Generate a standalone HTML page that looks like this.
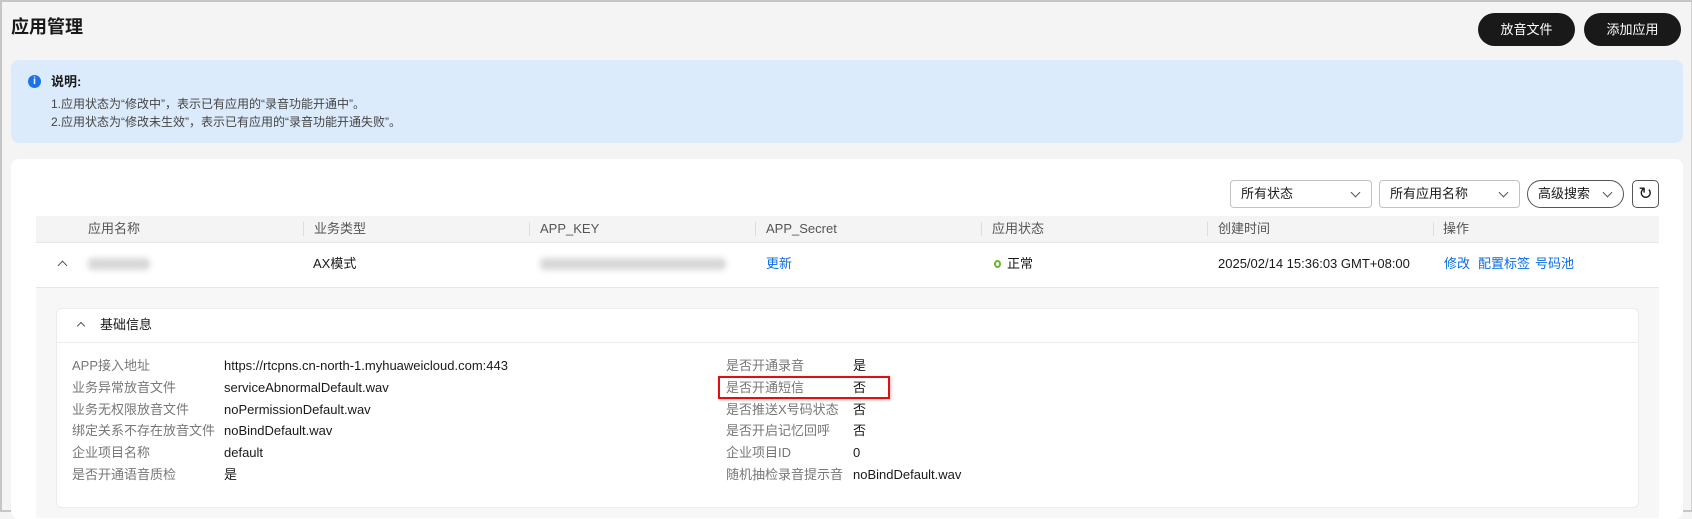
<!DOCTYPE html>
<html><head><meta charset="utf-8"><style>
*{box-sizing:border-box;margin:0;padding:0}
body{width:1692px;height:512px;background:#f4f4f4;font-family:"Liberation Sans","Noto Sans CJK SC",sans-serif;font-size:13px;color:#191919;position:relative;overflow:hidden;border:2px solid #c6c6c6;border-right:1px solid #d0d0d0}
.a{position:absolute;white-space:nowrap;line-height:16px}
.btn{position:absolute;top:11px;height:33px;width:97px;background:#191919;color:#fff;border-radius:17px;text-align:center;line-height:33px;font-size:13px}
.sel{position:absolute;top:178px;height:28px;border:1px solid #c2c2c2;border-radius:4px;background:#fff;padding-left:10px;line-height:26px;font-size:13px}
.chev{position:absolute;right:12px;top:8px;width:7px;height:7px;border-right:1px solid #555;border-bottom:1px solid #555;transform:rotate(45deg)}
.th{position:absolute;top:214px;line-height:26px;color:#555}
.sep{position:absolute;top:220px;width:1px;height:14px;background:#ddd}
.lbl{color:#777}
.blue{color:#0a6de0}
.blur{position:absolute;height:12px;background:#d8d8d8;filter:blur(3px);border-radius:4px}
</style></head><body>
<div class="a" style="left:9px;top:13px;font-size:18px;font-weight:bold;line-height:24px">应用管理</div>
<div class="btn" style="left:1476px">放音文件</div>
<div class="btn" style="left:1582px">添加应用</div>

<div class="a" style="left:9px;top:58px;width:1672px;height:83px;background:#dcebfc;border-radius:8px"></div>
<div class="a" style="left:26px;top:73px;width:13px;height:13px;border-radius:50%;background:#1a73e8;color:#fff;font-size:10px;text-align:center;line-height:13px;font-weight:bold">i</div>
<div class="a" style="left:49px;top:71px;font-weight:bold;line-height:18px">说明:</div>
<div class="a" style="left:49px;top:93px;color:#444;font-size:12px;line-height:18px">1.应用状态为“修改中”，表示已有应用的“录音功能开通中”。</div>
<div class="a" style="left:49px;top:111px;color:#444;font-size:12px;line-height:18px">2.应用状态为“修改未生效”，表示已有应用的“录音功能开通失败”。</div>

<div class="a" style="left:9px;top:157px;width:1672px;height:360px;background:#fff;border-radius:8px"></div>

<div class="sel" style="left:1228px;width:142px">所有状态<span class="chev"></span></div>
<div class="sel" style="left:1377px;width:141px">所有应用名称<span class="chev"></span></div>
<div class="sel" style="left:1525px;width:97px;border-radius:14px;border-color:#555">高级搜索<span class="chev"></span></div>
<div class="a" style="left:1630px;top:178px;width:27px;height:28px;border:1px solid #555;border-radius:5px;text-align:center;line-height:26px;font-size:17px">&#x21bb;</div>

<div class="a" style="left:34px;top:214px;width:1623px;height:27px;background:#f4f4f4;border-bottom:1px solid #e6e6e6"></div>
<div class="th" style="left:86px">应用名称</div>
<div class="sep" style="left:301px"></div><div class="th" style="left:312px">业务类型</div>
<div class="sep" style="left:527px"></div><div class="th" style="left:538px">APP_KEY</div>
<div class="sep" style="left:753px"></div><div class="th" style="left:764px">APP_Secret</div>
<div class="sep" style="left:979px"></div><div class="th" style="left:990px">应用状态</div>
<div class="sep" style="left:1205px"></div><div class="th" style="left:1216px">创建时间</div>
<div class="sep" style="left:1431px"></div><div class="th" style="left:1441px">操作</div>

<div class="a" style="left:34px;top:285px;width:1623px;height:1px;background:#e6e6e6"></div>
<div class="a" style="left:57px;top:260px;width:7px;height:7px;border-left:1.5px solid #555;border-top:1.5px solid #555;transform:rotate(45deg)"></div>
<div class="blur" style="left:86px;top:256px;width:62px"></div>
<div class="a" style="left:311px;top:254px">AX模式</div>
<div class="blur" style="left:538px;top:256px;width:186px"></div>
<div class="a blue" style="left:764px;top:254px">更新</div>
<div class="a" style="left:992px;top:258px;width:7px;height:8px;border:2px solid #6bb52a;border-radius:50%"></div>
<div class="a" style="left:1005px;top:254px">正常</div>
<div class="a" style="left:1216px;top:254px">2025/02/14 15:36:03 GMT+08:00</div>
<div class="a blue" style="left:1442px;top:254px">修改</div>
<div class="a blue" style="left:1476px;top:254px">配置标签</div>
<div class="a blue" style="left:1533px;top:254px">号码池</div>

<div class="a" style="left:34px;top:286px;width:1623px;height:230px;background:#f7f7f7"></div>
<div class="a" style="left:54px;top:306px;width:1583px;height:200px;background:#fff;border:1px solid #ececec;border-radius:6px"></div>
<div class="a" style="left:54px;top:340px;width:1583px;height:1px;background:#ececec"></div>
<div class="a" style="left:76px;top:321px;width:6px;height:6px;border-left:1px solid #555;border-top:1px solid #555;transform:rotate(45deg)"></div>
<div class="a" style="left:98px;top:315px">基础信息</div>

<div class="a lbl" style="left:70px;top:356px">APP接入地址</div><div class="a" style="left:222px;top:356px">https://rtcpns.cn-north-1.myhuaweicloud.com:443</div>
<div class="a lbl" style="left:70px;top:378px">业务异常放音文件</div><div class="a" style="left:222px;top:378px">serviceAbnormalDefault.wav</div>
<div class="a lbl" style="left:70px;top:400px">业务无权限放音文件</div><div class="a" style="left:222px;top:400px">noPermissionDefault.wav</div>
<div class="a lbl" style="left:70px;top:421px">绑定关系不存在放音文件</div><div class="a" style="left:222px;top:421px">noBindDefault.wav</div>
<div class="a lbl" style="left:70px;top:443px">企业项目名称</div><div class="a" style="left:222px;top:443px">default</div>
<div class="a lbl" style="left:70px;top:465px">是否开通语音质检</div><div class="a" style="left:222px;top:465px">是</div>

<div class="a lbl" style="left:724px;top:356px">是否开通录音</div><div class="a" style="left:851px;top:356px">是</div>
<div class="a lbl" style="left:724px;top:378px">是否开通短信</div><div class="a" style="left:851px;top:378px">否</div>
<div class="a lbl" style="left:724px;top:400px">是否推送X号码状态</div><div class="a" style="left:851px;top:400px">否</div>
<div class="a lbl" style="left:724px;top:421px">是否开启记忆回呼</div><div class="a" style="left:851px;top:421px">否</div>
<div class="a lbl" style="left:724px;top:443px">企业项目ID</div><div class="a" style="left:851px;top:443px">0</div>
<div class="a lbl" style="left:724px;top:465px">随机抽检录音提示音</div><div class="a" style="left:851px;top:465px">noBindDefault.wav</div>

<div class="a" style="left:716px;top:374px;width:172px;height:23px;border:2px solid #e01010;box-shadow:1px 1px 3px rgba(0,0,0,.25)"></div>
</body></html>
